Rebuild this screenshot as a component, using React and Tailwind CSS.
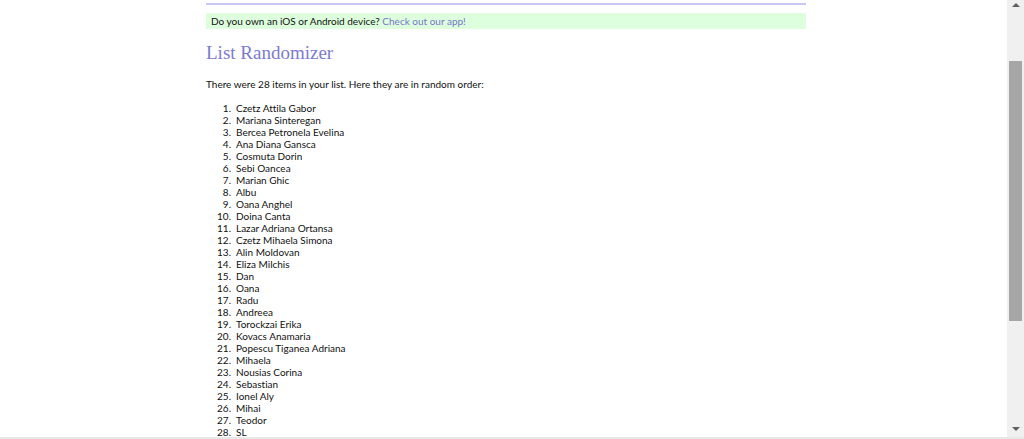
import React from "react";

const items = [
  "Czetz Attila Gabor",
  "Mariana Sinteregan",
  "Bercea Petronela Evelina",
  "Ana Diana Gansca",
  "Cosmuta Dorin",
  "Sebi Oancea",
  "Marian Ghic",
  "Albu",
  "Oana Anghel",
  "Doina Canta",
  "Lazar Adriana Ortansa",
  "Czetz Mihaela Simona",
  "Alin Moldovan",
  "Eliza Milchis",
  "Dan",
  "Oana",
  "Radu",
  "Andreea",
  "Torockzai Erika",
  "Kovacs Anamaria",
  "Popescu Tiganea Adriana",
  "Mihaela",
  "Nousias Corina",
  "Sebastian",
  "Ionel Aly",
  "Mihai",
  "Teodor",
  "SL",
];

export default function App() {
  return (
    <div className="relative flex h-[439px] w-[1024px] overflow-hidden bg-white">
      <div className="flex-1 overflow-hidden">
        <div
          className="ml-[206px] w-[600px] text-[10px] leading-[12px] text-[#111] [font-variant-ligatures:none]"
          style={{ fontFamily: "Lato, 'Noto Sans', sans-serif" }}
        >
          <div className="mt-[3px] h-[2px] bg-[#c8c8f4]" />
          <div className="mt-[8px] flex h-[16px] items-center bg-[#ddffdd] px-[5px]">
            Do you own an iOS or Android device?&nbsp;
            <span className="text-[#7676c8]">Check out our app!</span>
          </div>
          <h1
            className="mt-[12px] text-[19px] leading-[24px] text-[#7b7bd0]"
            style={{ fontFamily: "'Liberation Serif', Georgia, serif" }}
          >
            List Randomizer
          </h1>
          <p className="mt-[13px]">There were 28 items in your list. Here they are in random order:</p>
          <ol className="mt-[12px] pl-[5px]">
            {items.map((it, i) => (
              <li key={i} className="flex h-[12px]">
                <span className="w-[20px] text-right">{i + 1}.</span>
                <span className="ml-[5px]">{it}</span>
              </li>
            ))}
          </ol>
        </div>
      </div>
      <div className="relative w-[17px] bg-[#f0f0f0]">
        <div className="absolute left-[5px] top-[3px] h-0 w-0 border-x-[4px] border-b-[4px] border-x-transparent border-b-[#606060]" />
        <div className="absolute left-[2px] top-[61px] h-[260px] w-[13px] bg-[#a6a6a6]" />
        <div className="absolute left-[5px] top-[427px] h-0 w-0 border-x-[4px] border-t-[4px] border-x-transparent border-t-[#606060]" />
      </div>
      <div className="absolute bottom-0 left-0 h-[2px] w-full bg-[#e8e8e8]" />
    </div>
  );
}
